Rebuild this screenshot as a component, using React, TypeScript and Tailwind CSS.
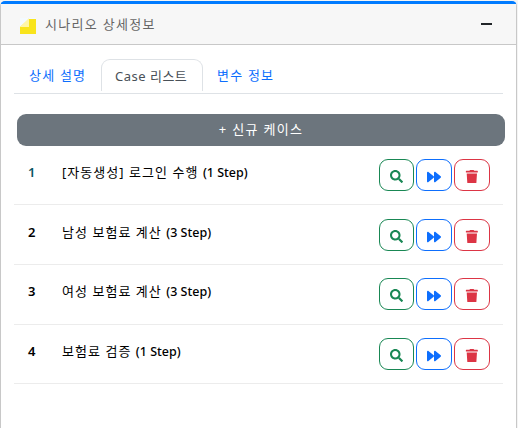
import React from "react";
import { FaSearch, FaForward, FaTrash } from "react-icons/fa";

const rows = [
  { id: 1, title: "[자동생성] 로그인 수행 ", steps: "(1 Step)", box: "h-[59px] pt-[13px]", color: "text-[#0b5563]" },
  { id: 2, title: "남성 보험료 계산 ", steps: "(3 Step)", box: "h-[60px] pt-[14px]", color: "text-black" },
  { id: 3, title: "여성 보험료 계산 ", steps: "(3 Step)", box: "h-[60px] pt-[13px]", color: "text-black" },
  { id: 4, title: "보험료 검증 ", steps: "(1 Step)", box: "h-[59px] pt-[13px]", color: "text-black" },
];

const action = "flex h-8 items-center justify-center rounded-[9px] border pt-[3px]";

export default function App() {
  return (
    <div className="h-[428px] w-[518px] overflow-hidden bg-[#f4f4f4] pt-px font-['Noto_Sans','Noto_Sans_CJK_KR',sans-serif] text-[13px]">
      <div className="h-[440px] w-[517px] rounded-t-[5px] border-x border-t-[3px] border-x-[#c8c8c8] border-t-[#007bff] bg-white">
        <header className="flex h-[41px] items-center border-b border-[#c8c8c8] bg-[#f7f7f7] pl-[19px] pr-[24px]">
          <svg className="mt-[3px]" width="16" height="16" viewBox="0 0 16 16">
            <rect width="16" height="16" fill="#f4faff" />
            <path d="M9 1h7v15H0V9l9-8z" fill="#f9e41c" />
            <path d="M0 9 9 0v9z" fill="#fff6a6" />
          </svg>
          <h1 className="ml-[9px] text-[13px] leading-5 tracking-[1.3px] text-[#666]">시나리오 상세정보</h1>
          <span className="ml-auto h-[2px] w-[11px] bg-[#212529]" />
        </header>
        <nav className="ml-[13px] flex h-[49px] w-[489px] border-b border-[#dee2e6] pt-[14px] leading-[33px]">
          <span className="w-[87px] pl-[15px] tracking-[1.2px] text-[#0d6efd]">상세 설명</span>
          <span className="h-[32px] w-[102px] rounded-t-[9px] border border-b-0 border-[#dee2e6] pl-[13px] tracking-[0.5px] text-[#495057]">Case 리스트</span>
          <span className="pl-[14px] tracking-[1.2px] text-[#0d6efd]">변수 정보</span>
        </nav>
        <button className="ml-[16px] mt-[20px] flex h-8 w-[488px] items-center justify-center rounded-[9px] bg-[#6c757d] tracking-[1.3px] text-white">
          + 신규 케이스
        </button>
        <ul className="ml-[13px] w-[489px]">
          {rows.map((r) => (
            <li key={r.id} className={`flex border-b border-[#ececec] ${r.box}`}>
              <span className={`w-[48px] pl-[14px] font-semibold leading-[26px] ${r.color}`}>{r.id}</span>
              <span className="whitespace-pre leading-[26px] text-black">
                <span className="tracking-[1.04px]">{r.title}</span>
                <span className="text-[12.5px] font-medium">{r.steps}</span>
              </span>
              <div className="ml-auto mr-[13px] flex gap-[2px]">
                <button className={`${action} w-[35px] border-[#198754] text-[#198754]`}><FaSearch size={13} /></button>
                <button className={`${action} w-[36px] border-[#0d6efd] pt-[2px] text-[#0d6efd]`}><FaForward size={14} /></button>
                <button className={`${action} w-[36px] border-[#dc3545] pr-px text-[#dc3545]`}><FaTrash size={13.7} /></button>
              </div>
            </li>
          ))}
        </ul>
      </div>
    </div>
  );
}
